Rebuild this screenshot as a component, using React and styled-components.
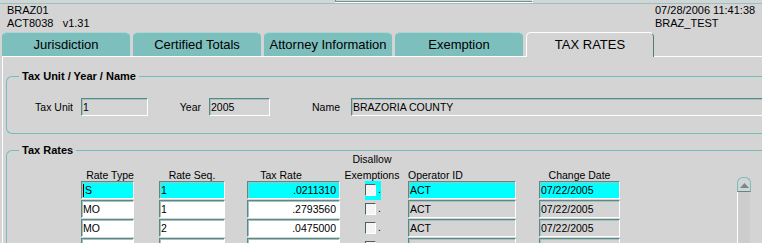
import React from 'react';
import styled, { createGlobalStyle } from 'styled-components';

const C = {
  bg: '#d4d4d4',
  teal: '#7dbfbd',
  tealLight: '#a9d7d5',
  line: '#78bcba',
  dark: '#5f8785',
  cyan: '#00ffff',
};

const Global = createGlobalStyle`
  html, body { margin: 0; padding: 0; background: ${C.bg}; overflow: hidden; }
  body { font-family: "Liberation Sans", Arial, Helvetica, sans-serif; color: #000; }
  #root { width: 762px; height: 243px; overflow: hidden; }
`;

const Page = styled.div`
  width: 762px;
  height: 243px;
  overflow: hidden;
  background: ${C.bg};
  display: flex;
  flex-direction: column;
`;

const TopStrip = styled.div`
  flex: none;
  height: 3px;
  border-bottom: 1px solid #8fc6c4;
  display: flex;
`;

const PrevBox = styled.div`
  margin-left: 335px;
  width: 196px;
  height: 1px;
  border-left: 1px solid #7f8a8a;
  border-bottom: 1px solid #7f8a8a;
  border-right: 1px solid #fff;
  box-shadow: 0 1px 0 #fff;
`;

const Header = styled.div`
  flex: none;
  height: 28px;
  padding-left: 7px;
  display: flex;
  justify-content: space-between;
`;

const HeaderCol = styled.div`
  width: ${p => p.$w || 'auto'};
  font-size: 11px;
  line-height: 13px;
  white-space: pre;
`;

const TabBar = styled.div`
  flex: none;
  height: 24px;
  padding-left: 2px;
  display: flex;
  align-items: flex-end;
  gap: 3px;
`;

const Tab = styled.div`
  position: relative;
  z-index: 1;
  box-sizing: border-box;
  width: 128px;
  height: ${p => (p.$active ? '25px' : '24px')};
  margin-bottom: ${p => (p.$active ? '-1px' : '0')};
  border-radius: 5px 5px 0 0;
  background: ${p => (p.$active ? C.bg : C.teal)};
  border-top: 1px solid ${p => (p.$active ? '#fff' : C.tealLight)};
  border-left: 1px solid ${p => (p.$active ? '#fff' : C.teal)};
  border-right: 1px solid ${p => (p.$active ? '#4f7b79' : C.teal)};
  font-size: 13px;
  line-height: 14px;
  padding-top: 5px;
  text-align: center;
  white-space: nowrap;
`;

const Panel = styled.div`
  flex: 1;
  margin-left: 2px;
  border-top: 1px solid #fff;
  border-left: 1px solid #fff;
  padding-left: 3px;
  display: flex;
  flex-direction: column;
  align-items: flex-start;
  min-height: 0;
  overflow: hidden;
`;

const Group = styled.div`
  position: relative;
  flex: none;
  width: 800px;
  margin-top: ${p => p.$top}px;
  border: 1px solid ${C.line};
  border-right: none;
  border-radius: 6px 0 0 6px;
  height: ${p => (p.$h ? `${p.$h}px` : 'auto')};
  box-sizing: border-box;
`;

const GroupTitle = styled.div`
  position: absolute;
  left: 12px;
  top: -7px;
  padding: 0 3px;
  background: ${C.bg};
  font-size: 11px;
  font-weight: bold;
  line-height: 13px;
`;

const FieldRow = styled.div`
  display: flex;
  align-items: center;
  height: 18px;
  padding: 21px 0 17px 0;
`;

const Label = styled.div`
  box-sizing: border-box;
  width: ${p => p.$w}px;
  padding-right: ${p => p.$gap}px;
  text-align: right;
  font-size: 10.5px;
  white-space: nowrap;
`;

const Field = styled.div`
  box-sizing: border-box;
  flex: none;
  width: ${p => p.$w}px;
  height: 18px;
  display: flex;
  align-items: center;
  justify-content: ${p => (p.$right ? 'flex-end' : 'flex-start')};
  padding: 0 ${p => (p.$right ? '3px' : '0')} 0 1px;
  background: ${p => (p.$hl ? C.cyan : p.$edit ? '#fff' : C.bg)};
  border-top: 1px solid ${C.dark};
  border-left: 1px solid ${C.dark};
  border-right: 1px solid #fff;
  border-bottom: 1px solid #fff;
  box-shadow: inset 1px 1px 0 #9fc3c1;
  font-size: 10.5px;
  white-space: nowrap;
  overflow: hidden;
`;

const Caret = styled.span`
  display: inline-block;
  width: 1px;
  height: 13px;
  background: #000;
  margin-right: 1px;
`;

const TableArea = styled.div`
  display: flex;
  align-items: flex-start;
`;

const Grid = styled.div`
  display: grid;
  padding-left: 74px;
  grid-template-columns: 53px 25px 66px 22px 93px 68px 108px 23px 81px;
  grid-template-rows: 29px repeat(4, 18px);
  row-gap: 1px;
`;

const Head = styled.div`
  grid-column: ${p => p.$col};
  align-self: end;
  margin-bottom: -1px;
  font-size: 10.5px;
  line-height: 12px;
  white-space: nowrap;
  text-align: ${p => p.$align || 'center'};
  padding: 0 ${p => p.$pr || 0}px 0 ${p => p.$pl || 0}px;
  display: flex;
  flex-direction: column;
  gap: 4px;
`;

const Cell = styled.div`
  grid-column: ${p => p.$col};
  display: flex;
`;

const CheckCell = styled.div`
  grid-column: 6;
  display: flex;
  padding-left: 25px;
`;

const CheckWrap = styled.div`
  width: 16px;
  height: 19px;
  background: ${p => (p.$hl ? C.cyan : 'transparent')};
  display: flex;
  align-items: flex-start;
`;

const Check = styled.div`
  box-sizing: border-box;
  width: 11px;
  height: 12px;
  margin-top: 3px;
  background: #f4f4f4;
  border-top: 1px solid #4b6262;
  border-left: 1px solid #4b6262;
  border-right: 1px solid #fff;
  border-bottom: 1px solid #fff;
`;

const Dot = styled.span`
  font-size: 10.5px;
  line-height: 17px;
  margin-left: 2px;
`;

const Scroll = styled.div`
  margin-left: 117px;
  margin-top: 26px;
  width: 14px;
  display: flex;
  flex-direction: column;
`;

const ScrollBtn = styled.div`
  box-sizing: border-box;
  height: 15px;
  border: 1px solid ${C.line};
  border-bottom: 1px solid ${C.dark};
  border-radius: 6px 6px 0 0;
  display: flex;
  align-items: center;
  justify-content: center;
  padding-top: 1px;
`;

const Trough = styled.div`
  height: 70px;
  background: #cdcdcd;
  border-left: 1px solid #fff;
  margin-right: 1px;
`;

const rows = [
  { type: 'S', seq: '1', rate: '.0211310', op: 'ACT', date: '07/22/2005', hl: true },
  { type: 'MO', seq: '1', rate: '.2793560', op: 'ACT', date: '07/22/2005' },
  { type: 'MO', seq: '2', rate: '.0475000', op: 'ACT', date: '07/22/2005' },
  { type: '', seq: '', rate: '', op: '', date: '' },
];

const tabs = ['Jurisdiction', 'Certified Totals', 'Attorney Information', 'Exemption', 'TAX RATES'];

export default function App() {
  return (
    <Page>
      <Global />
      <TopStrip>
        <PrevBox />
      </TopStrip>
      <Header>
        <HeaderCol>
          <div>BRAZ01</div>
          <div>{'ACT8038   v1.31'}</div>
        </HeaderCol>
        <HeaderCol $w="107px">
          <div>07/28/2006 11:41:38</div>
          <div>BRAZ_TEST</div>
        </HeaderCol>
      </Header>
      <TabBar>
        {tabs.map((t, i) => (
          <Tab key={t} $active={i === 4}>{t}</Tab>
        ))}
      </TabBar>
      <Panel>
        <Group $top={19}>
          <GroupTitle>Tax Unit / Year / Name</GroupTitle>
          <FieldRow>
            <Label $w={74} $gap={8}>Tax Unit</Label>
            <Field $w={67}>1</Field>
            <Label $w={61} $gap={8}>Year</Label>
            <Field $w={61}>2005</Field>
            <Label $w={81} $gap={11}>Name</Label>
            <Field $w={440}>BRAZORIA COUNTY</Field>
          </FieldRow>
        </Group>
        <Group $top={16} $h={120}>
          <GroupTitle>Tax Rates</GroupTitle>
          <TableArea>
            <Grid>
              <Head $col={1} $pl={5}>Rate Type</Head>
              <Head $col={3}>Rate Seq.</Head>
              <Head $col={5} $pr={25}>Tax Rate</Head>
              <Head $col={6} $pr={4}>
                <span>Disallow</span>
                <span>Exemptions</span>
              </Head>
              <Head $col={7} $align="left">Operator ID</Head>
              <Head $col={9}>Change Date</Head>
              {rows.map((r, i) => (
                <React.Fragment key={i}>
                  <Cell $col={1}>
                    <Field $w={53} $edit $hl={r.hl}>
                      {r.hl && <Caret />}
                      {r.type}
                    </Field>
                  </Cell>
                  <Cell $col={3}>
                    <Field $w={66} $edit $hl={r.hl}>{r.seq}</Field>
                  </Cell>
                  <Cell $col={5}>
                    <Field $w={93} $edit $hl={r.hl} $right>{r.rate}</Field>
                  </Cell>
                  <CheckCell>
                    <CheckWrap $hl={r.hl}>
                      <Check />
                      {i < 3 && <Dot>.</Dot>}
                    </CheckWrap>
                  </CheckCell>
                  <Cell $col={7}>
                    <Field $w={108} $hl={r.hl}>{r.op}</Field>
                  </Cell>
                  <Cell $col={9}>
                    <Field $w={81} $hl={r.hl}>{r.date}</Field>
                  </Cell>
                </React.Fragment>
              ))}
            </Grid>
            <Scroll>
              <ScrollBtn>
                <svg width="9" height="5" viewBox="0 0 9 5">
                  <polygon points="0,5 4.5,0 9,5" fill="#6f8d8b" />
                </svg>
              </ScrollBtn>
              <Trough />
            </Scroll>
          </TableArea>
        </Group>
      </Panel>
    </Page>
  );
}
